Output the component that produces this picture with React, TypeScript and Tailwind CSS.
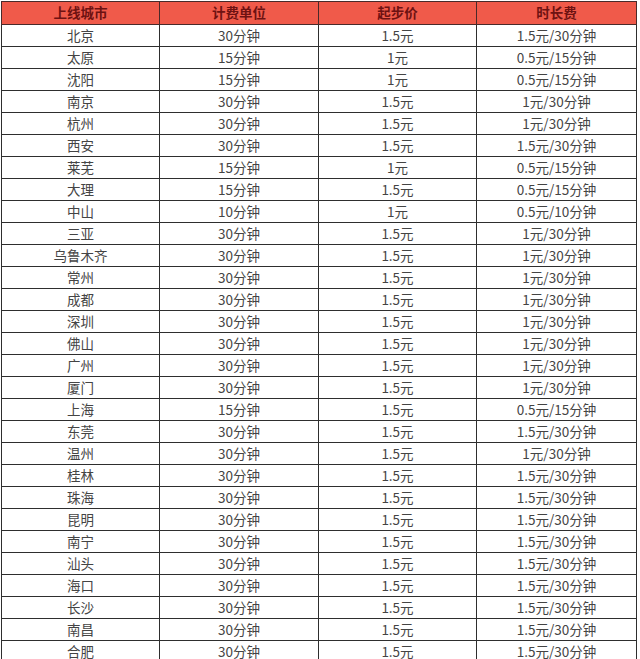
const rows: [string, string, string, string][] = [
  ["北京", "30分钟", "1.5元", "1.5元/30分钟"],
  ["太原", "15分钟", "1元", "0.5元/15分钟"],
  ["沈阳", "15分钟", "1元", "0.5元/15分钟"],
  ["南京", "30分钟", "1.5元", "1元/30分钟"],
  ["杭州", "30分钟", "1.5元", "1元/30分钟"],
  ["西安", "30分钟", "1.5元", "1.5元/30分钟"],
  ["莱芜", "15分钟", "1元", "0.5元/15分钟"],
  ["大理", "15分钟", "1.5元", "0.5元/15分钟"],
  ["中山", "10分钟", "1元", "0.5元/10分钟"],
  ["三亚", "30分钟", "1.5元", "1元/30分钟"],
  ["乌鲁木齐", "30分钟", "1.5元", "1元/30分钟"],
  ["常州", "30分钟", "1.5元", "1元/30分钟"],
  ["成都", "30分钟", "1.5元", "1元/30分钟"],
  ["深圳", "30分钟", "1.5元", "1元/30分钟"],
  ["佛山", "30分钟", "1.5元", "1元/30分钟"],
  ["广州", "30分钟", "1.5元", "1元/30分钟"],
  ["厦门", "30分钟", "1.5元", "1元/30分钟"],
  ["上海", "15分钟", "1.5元", "0.5元/15分钟"],
  ["东莞", "30分钟", "1.5元", "1.5元/30分钟"],
  ["温州", "30分钟", "1.5元", "1元/30分钟"],
  ["桂林", "30分钟", "1.5元", "1.5元/30分钟"],
  ["珠海", "30分钟", "1.5元", "1.5元/30分钟"],
  ["昆明", "30分钟", "1.5元", "1.5元/30分钟"],
  ["南宁", "30分钟", "1.5元", "1.5元/30分钟"],
  ["汕头", "30分钟", "1.5元", "1.5元/30分钟"],
  ["海口", "30分钟", "1.5元", "1.5元/30分钟"],
  ["长沙", "30分钟", "1.5元", "1.5元/30分钟"],
  ["南昌", "30分钟", "1.5元", "1.5元/30分钟"],
  ["合肥", "30分钟", "1.5元", "1.5元/30分钟"],
];

const headers = ["上线城市", "计费单位", "起步价", "时长费"];

export default function App() {
  return (
    <div
      className="w-[640px] h-[659px] overflow-hidden bg-white pt-px pl-px"
      style={{ fontFamily: '"Noto Sans CJK SC", "Noto Sans", sans-serif' }}
    >
      <table className="table-fixed border-collapse w-[635px] text-[13.5px] text-[#444444]">
        <colgroup>
          <col className="w-[158px]" />
          <col className="w-[159px]" />
          <col className="w-[158px]" />
          <col className="w-[160px]" />
        </colgroup>
        <thead>
          <tr className="h-[23px] bg-[#f05a4a]">
            {headers.map((h) => (
              <th
                key={h}
                className="border border-[#4a2a2a] p-0 font-bold text-[13.5px] leading-none text-[#6e1212]"
              >
                {h}
              </th>
            ))}
          </tr>
        </thead>
        <tbody>
          {rows.map((r) => (
            <tr key={r[0]} className="h-[22px]">
              {r.map((c, i) => (
                <td
                  key={i}
                  className="border border-[#2e2e2e] p-0 text-center leading-none"
                >
                  {c}
                </td>
              ))}
            </tr>
          ))}
        </tbody>
      </table>
    </div>
  );
}
